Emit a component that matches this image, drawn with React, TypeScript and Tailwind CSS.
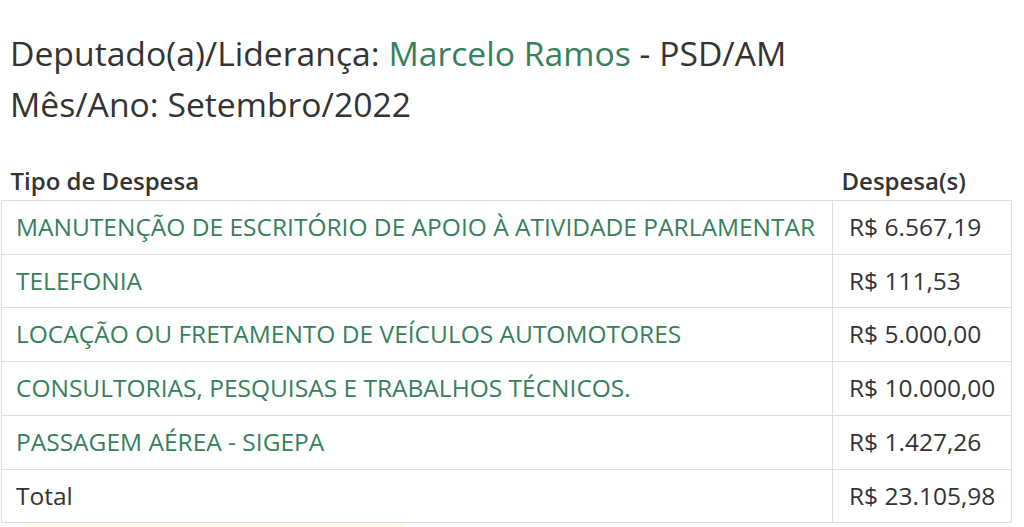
import React from "react"

const rows: { tipo: string; valor: string }[] = [
  { tipo: "MANUTENÇÃO DE ESCRITÓRIO DE APOIO À ATIVIDADE PARLAMENTAR", valor: "R$ 6.567,19" },
  { tipo: "TELEFONIA", valor: "R$ 111,53" },
  { tipo: "LOCAÇÃO OU FRETAMENTO DE VEÍCULOS AUTOMOTORES", valor: "R$ 5.000,00" },
  { tipo: "CONSULTORIAS, PESQUISAS E TRABALHOS TÉCNICOS.", valor: "R$ 10.000,00" },
  { tipo: "PASSAGEM AÉREA - SIGEPA", valor: "R$ 1.427,26" },
]

export default function App() {
  return (
    <div
      className="bg-white text-[#333] h-[527px] overflow-hidden"
      style={{ fontFamily: '"Open Sans", "Noto Sans", sans-serif' }}
    >
      <div className="pt-[28px] pl-[10px] text-[33.7px] leading-[51px]">
        <p>
          Deputado(a)/Liderança: <a className="text-[#36805c]">Marcelo Ramos</a> - PSD/AM
        </p>
        <p>Mês/Ano: Setembro/2022</p>
      </div>

      <table className="mt-[35px] ml-px w-[1011px] table-fixed border-collapse text-[24.5px] leading-[30.7px] whitespace-nowrap">
        <thead>
          <tr>
            <th className="text-left font-semibold text-[24px] leading-[32px] px-[9px] pb-[3px]">
              Tipo de Despesa
            </th>
            <th className="text-left font-semibold text-[24px] leading-[32px] px-[9px] pb-[3px] w-[179px]">
              Despesa(s)
            </th>
          </tr>
        </thead>
        <tbody>
          {rows.map((r) => (
            <tr key={r.tipo}>
              <td className="border border-[#ddd] pl-[14px] pr-[8px] py-[11px] text-[#36805c]">
                <a>{r.tipo}</a>
              </td>
              <td className="border border-[#ddd] px-[16px] py-[11px]">{r.valor}</td>
            </tr>
          ))}
          <tr>
            <td className="border border-[#ddd] pl-[14px] pr-[8px] py-[11px]">Total</td>
            <td className="border border-[#ddd] px-[16px] py-[11px]">R$ 23.105,98</td>
          </tr>
        </tbody>
      </table>

      <div className="mt-[2px] ml-[25px] w-[380px] h-[20px] bg-[#fdfbe8]" />
    </div>
  )
}
